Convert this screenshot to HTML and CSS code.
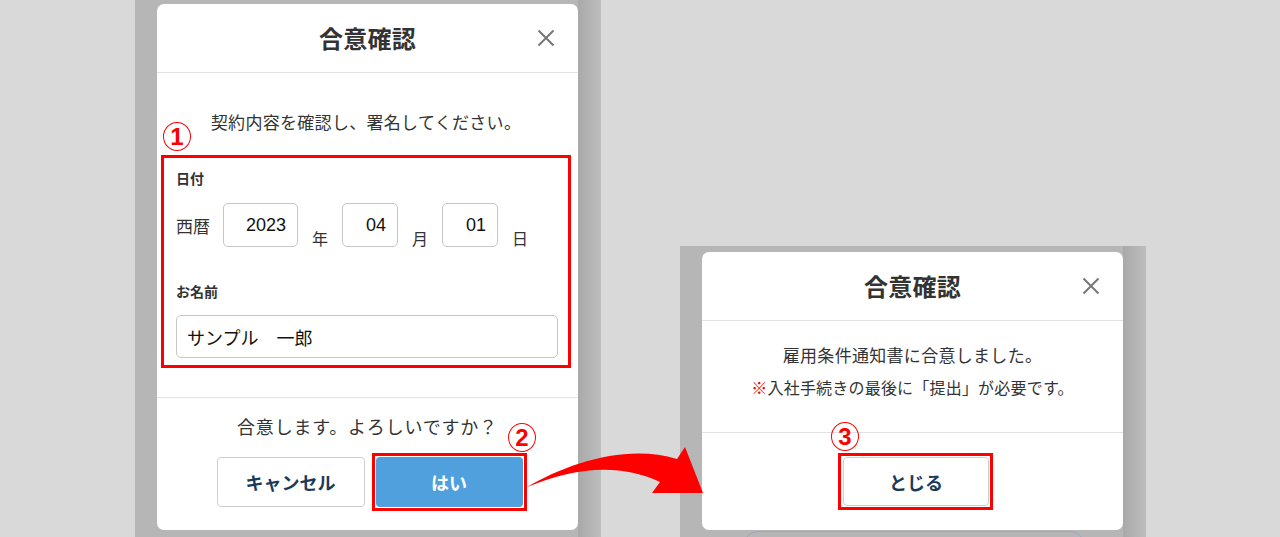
FILE: index.html
```html
<!DOCTYPE html>
<html lang="ja">
<head>
<meta charset="utf-8">
<title>合意確認</title>
<link rel="stylesheet" href="styles.css">
</head>
<body>
<div class="stage">
  <section class="panel panel-left">
    <div class="modal modal-left">
      <div class="modal-head">
        <h2 class="modal-title">合意確認</h2>
        <span class="close"><svg width="18" height="18" viewBox="0 0 18 18"><path d="M1.5 1.5 L16.5 16.5 M16.5 1.5 L1.5 16.5" stroke="#777" stroke-width="2" fill="none"/></svg></span>
      </div>
      <div class="modal-body">
        <p class="intro">契約内容を確認し、署名してください。</p>
        <div class="form-box">
          <div class="field-label">日付</div>
          <div class="date-row">
            <span class="era">西暦</span>
            <input class="num-input w-year" value="2023" readonly>
            <span class="unit">年</span>
            <input class="num-input w-small" value="04" readonly>
            <span class="unit">月</span>
            <input class="num-input w-small" value="01" readonly>
            <span class="unit">日</span>
          </div>
          <div class="field-label name-label">お名前</div>
          <input class="name-input" value="サンプル　一郎" readonly>
        </div>
      </div>
      <div class="modal-foot">
        <p class="question">合意します。よろしいですか？</p>
        <div class="btn-row">
          <button class="btn btn-cancel">キャンセル</button>
          <span class="mark"><button class="btn btn-yes">はい</button></span>
        </div>
      </div>
      <span class="num num-1">1</span>
      <span class="num num-2">2</span>
    </div>
  </section>

  <section class="panel panel-right">
    <div class="modal modal-right">
      <div class="modal-head">
        <h2 class="modal-title">合意確認</h2>
        <span class="close"><svg width="18" height="18" viewBox="0 0 18 18"><path d="M1.5 1.5 L16.5 16.5 M16.5 1.5 L1.5 16.5" stroke="#777" stroke-width="2" fill="none"/></svg></span>
      </div>
      <div class="modal-body done-body">
        <p class="done-main">雇用条件通知書に合意しました。</p>
        <p class="done-note"><span class="kome">※</span>入社手続きの最後に「提出」が必要です。</p>
      </div>
      <div class="modal-foot done-foot">
        <span class="mark mark-close"><button class="btn btn-close">とじる</button></span>
      </div>
      <span class="num num-3">3</span>
    </div>
    <div class="under-pill"></div>
  </section>

  <svg class="arrow" width="1280" height="537" viewBox="0 0 1280 537">
    <path d="M527 487 C 570 462 628 444 677 459 L 685 447 L 703 493 L 652 493 L 660 482 C 620 463 575 467 527 487 Z" fill="#ff0000"/>
  </svg>
</div>
</body>
</html>
```

FILE: styles.css
```css
* { box-sizing: border-box; }

body {
  margin: 0;
  background: #d9d9d9;
  font-family: "Noto Sans CJK JP", "Noto Sans", sans-serif;
  color: #333;
}

.stage {
  position: relative;
  display: flex;
  width: 1280px;
  height: 537px;
  overflow: hidden;
}

.panel {
  width: 466px;
  overflow: hidden;
  background: linear-gradient(to right, #b6b6b6 0, #b6b6b6 443px, #a9a9a9 443px, #bdbdbd 466px);
}

.panel-left {
  margin-left: 135px;
  height: 537px;
  padding: 4px 23px 0 22px;
}

.panel-right {
  margin-left: 79px;
  align-self: flex-end;
  height: 291px;
  padding: 6px 23px 0 22px;
}

.modal {
  position: relative;
  width: 421px;
  background: #fff;
  border-radius: 7px;
  display: flex;
  flex-direction: column;
}

.modal-left { height: 526px; }
.modal-right { height: 278px; }

.modal-head {
  position: relative;
  height: 69px;
  border-bottom: 1px solid #e3e3e3;
  display: flex;
  align-items: center;
  justify-content: center;
}

.modal-title {
  margin: 0;
  font-size: 24px;
  font-weight: 700;
  line-height: 1;
  letter-spacing: 0.3px;
  color: #333;
}

.close {
  position: absolute;
  right: 23px;
  top: 25px;
  width: 18px;
  height: 18px;
  display: block;
}
.close svg { display: block; }

.modal-body {
  padding: 37px 7px 29px 4px;
}

.intro {
  margin: 0;
  text-align: center;
  font-size: 17px;
  line-height: 24px;
  letter-spacing: 0.3px;
  color: #333;
}

.form-box {
  margin-top: 21px;
  border: 3px solid #ff0000;
  padding: 10px 10px 7px 12px;
}

.field-label {
  font-size: 14px;
  font-weight: 700;
  line-height: 20px;
  color: #333;
}

.date-row {
  margin-top: 15px;
  height: 44px;
  display: flex;
  align-items: flex-end;
  gap: 14px;
}

.era {
  align-self: center;
  font-size: 17px;
  line-height: 17px;
  width: 33px;
  white-space: nowrap;
}

.unit {
  font-size: 16px;
  line-height: 17px;
}

.num-input {
  height: 44px;
  border: 1px solid #c6c6c6;
  border-radius: 5px;
  background: #fff;
  text-align: right;
  padding: 0 11px 0 4px;
  font-family: "Liberation Sans", Arial, sans-serif;
  font-size: 18px;
  color: #111;
  outline: none;
}
.w-year { width: 75px; }
.w-small { width: 56px; }

.name-label { margin-top: 34px; }

.name-input {
  display: block;
  margin-top: 14px;
  width: 382px;
  height: 43px;
  border: 1px solid #c6c6c6;
  border-radius: 5px;
  background: #fff;
  padding: 0 10px;
  font-family: "Noto Sans CJK JP", sans-serif;
  font-size: 18px;
  color: #111;
  outline: none;
}

.modal-foot {
  border-top: 1px solid #e3e3e3;
  padding: 15px 0 23px;
}

.question {
  margin: 0;
  text-align: center;
  font-size: 18px;
  line-height: 26px;
  letter-spacing: 0.8px;
  color: #333;
}

.btn-row {
  margin-top: 18px;
  display: flex;
  justify-content: center;
  gap: 11px;
  padding-left: 4px;
}

.btn {
  display: block;
  width: 148px;
  height: 50px;
  border-radius: 4px;
  font-family: "Noto Sans CJK JP", sans-serif;
  font-size: 18px;
  font-weight: 700;
  cursor: pointer;
}

.btn-cancel {
  background: #fff;
  border: 1px solid #cfcfcf;
  color: #1b3a57;
}

.btn-yes {
  background: #4fa0dd;
  border: none;
  color: #fff;
  width: 147px;
}

.mark {
  display: flex;
  border: 3px solid #ff0000;
  padding: 1px;
  margin: -4px;
}

.done-body {
  padding: 22px 0 33px;
  text-align: center;
}

.done-main {
  margin: 0;
  font-size: 17px;
  line-height: 24px;
  letter-spacing: 0.3px;
}

.done-note {
  margin: 8px 0 0;
  font-size: 16px;
  line-height: 24px;
  letter-spacing: 0.2px;
}

.kome { color: #f00000; }

.done-foot {
  padding: 24px 0 24px;
  display: flex;
  justify-content: center;
}

.mark-close { padding: 1px 1px 1px 2px; margin-left: 2px; }

.btn-close {
  width: 146px;
  height: 49px;
  background: #fff;
  border: 1px solid #cfcfcf;
  color: #1b3a57;
}

.num {
  position: absolute;
  width: 28px;
  height: 29px;
  border: 1px solid #ff0000;
  border-radius: 50%;
  color: #ff0000;
  font-family: "Liberation Sans", Arial, sans-serif;
  font-weight: 700;
  font-size: 24px;
  line-height: 27px;
  text-align: center;
}
.num-1 { left: 6px; top: 118px; }
.num-2 { left: 351px; top: 419px; }
.num-3 { left: 129px; top: 170px; }

.under-pill {
  margin: 1px 0 0 41px;
  width: 342px;
  height: 30px;
  border: 1.5px solid #9ba6c4;
  border-radius: 16px;
}

.arrow {
  position: absolute;
  left: 0;
  top: 0;
  pointer-events: none;
}
```
